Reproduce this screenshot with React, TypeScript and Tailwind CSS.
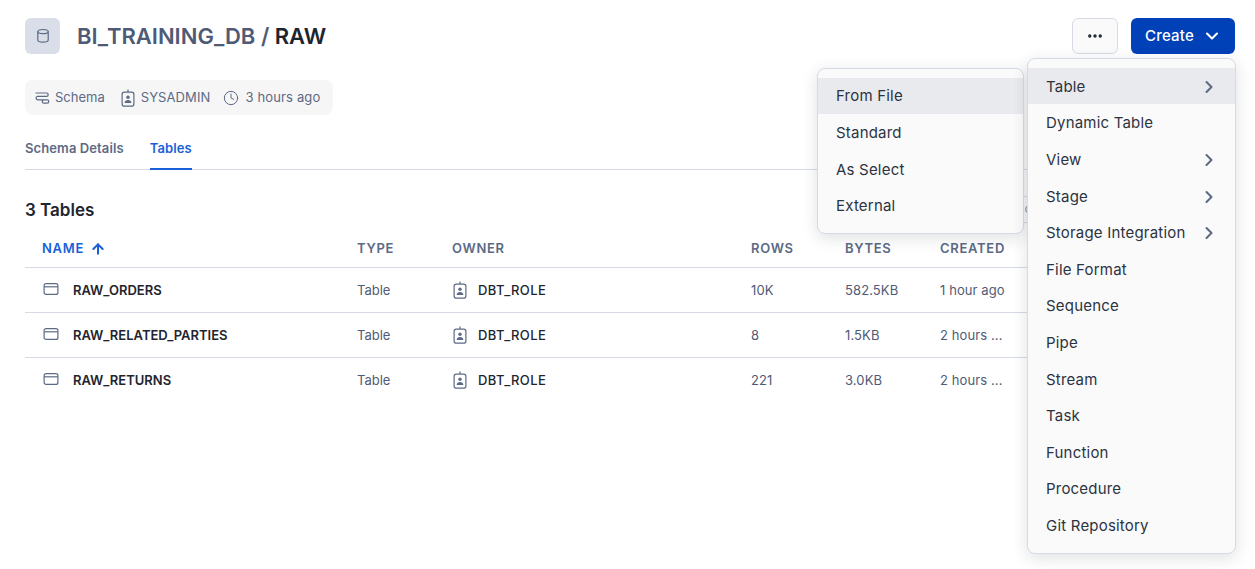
import { ArrowUp, ChevronDown, ChevronRight, Clock, Ellipsis, Search } from "lucide-react";

const font = { fontFamily: "Inter, sans-serif" };

function Database({ className = "" }: { className?: string }) {
  return (
    <svg viewBox="0 0 16 16" fill="none" stroke="currentColor" strokeWidth="1.2" className={className}>
      <ellipse cx="8" cy="3.6" rx="5.2" ry="2.1" />
      <path d="M2.8 3.6v8.4c0 1.2 2.3 2.2 5.2 2.2s5.2-1 5.2-2.2V3.6" />
    </svg>
  );
}

function Badge({ className = "" }: { className?: string }) {
  return (
    <svg viewBox="0 0 18 18" fill="none" stroke="currentColor" strokeWidth="1.2" className={className}>
      <rect x="3.1" y="3.1" width="11.8" height="14" rx="2.2" />
      <path d="M9 .5v2.6" />
      <circle cx="9" cy="8.2" r="1.7" fill="currentColor" stroke="none" />
      <path d="M5.6 14c0-2 1.5-3 3.4-3s3.4 1 3.4 3z" fill="currentColor" stroke="none" />
    </svg>
  );
}

function SchemaIcon({ className = "" }: { className?: string }) {
  return (
    <svg viewBox="0 0 16 16" fill="none" stroke="currentColor" strokeWidth="1.2" strokeLinecap="round" className={className}>
      <path d="M2 3h10.5a1.7 1.7 0 0 1 0 3.4H3.8" />
      <path d="M3.8 6.4a1.7 1.7 0 0 0 0 3.4h5" />
      <rect x="8.2" y="9.8" width="6.6" height="3.4" rx="1.7" />
    </svg>
  );
}

function TableIcon({ className = "" }: { className?: string }) {
  return (
    <svg viewBox="0 0 16 16" fill="none" stroke="currentColor" strokeWidth="1.2" className={className}>
      <rect x="1.1" y="2.6" width="13.8" height="10.8" rx="2" />
      <path d="M1.1 5.8h13.8" />
    </svg>
  );
}

const rows = [
  ["RAW_ORDERS", "10K", "582.5KB", "1 hour ago"],
  ["RAW_RELATED_PARTIES", "8", "1.5KB", "2 hours ..."],
  ["RAW_RETURNS", "221", "3.0KB", "2 hours ..."],
];

const grid = "grid grid-cols-[315px_95px_299px_94px_95px_1fr]";

const createItems: [string, boolean][] = [
  ["Table", true],
  ["Dynamic Table", false],
  ["View", true],
  ["Stage", true],
  ["Storage Integration", true],
  ["File Format", false],
  ["Sequence", false],
  ["Pipe", false],
  ["Stream", false],
  ["Task", false],
  ["Function", false],
  ["Procedure", false],
  ["Git Repository", false],
];

const subItems = ["From File", "Standard", "As Select", "External"];

export default function App() {
  return (
    <div style={font} className="relative h-[569px] w-[1255px] overflow-hidden bg-white pl-[25px] pr-[20px] pt-[18px] text-[#1e252f]">
      <header className="flex h-[36px] items-center justify-between">
        <div className="flex items-center gap-[17px]">
          <div className="flex h-[36px] w-[35px] items-center justify-center rounded-[6px] bg-[#d9dee8] text-[#5d6a85]">
            <Database className="h-[16px] w-[16px]" />
          </div>
          <h1 className="text-[22px] font-semibold leading-[36px] text-[#4f5b76]">
            BI_TRAINING_DB / <span className="text-[#1e252f]">RAW</span>
          </h1>
        </div>
        <div className="flex items-center gap-[13px]">
          <button className="flex h-[36px] w-[46px] items-center justify-center rounded-[6px] border border-[#d5dae6] bg-[#fafafb] text-[#1e252f]">
            <Ellipsis className="h-[18px] w-[18px]" strokeWidth={2.5} />
          </button>
          <button className="flex h-[36px] w-[104px] items-center gap-[8px] rounded-[6px] bg-[#0041b8] pl-[14px] text-[15px] font-medium tracking-[0.2px] text-white">
            Create
            <ChevronDown className="h-[20px] w-[20px]" strokeWidth={2.5} />
          </button>
        </div>
      </header>

      <div className="mt-[26px] flex h-[35px] w-[308px] items-center rounded-[8px] bg-[#f6f6f7] pl-[9px] text-[13px] text-[#5d6a85]">
        <span className="flex items-center gap-[5px]">
          <SchemaIcon className="h-[16px] w-[16px]" />
          Schema
        </span>
        <span className="ml-[14px] flex items-center gap-[4px] tracking-[0.1px]">
          <Badge className="h-[18px] w-[18px]" />
          SYSADMIN
        </span>
        <span className="ml-[13px] flex items-center gap-[6px]">
          <Clock className="h-[16px] w-[16px]" strokeWidth={1.5} />
          <span className="tracking-[0.15px]">3 hours ago</span>
        </span>
      </div>

      <nav className="mt-[16px] flex h-[39px] items-stretch gap-[26px] border-b border-[#d5dae6] text-[13px] font-semibold tracking-[0.1px]">
        <span className="pt-[8px] text-[#5d6a85]">Schema Details</span>
        <span className="-mb-px border-b-2 border-[#1a5fd8] pt-[8px] text-[#1a5fd8]">Tables</span>
      </nav>

      <div className="mt-[26px] flex h-[27px] items-center justify-between">
        <h2 className="text-[17px] font-semibold leading-[24px]">3 Tables</h2>
        <div className="flex h-[27px] w-[220px] items-center border-y border-[#d5dae6] pl-[9px] text-[#5d6a85]">
          <Search className="h-[14px] w-[14px]" strokeWidth={1.5} />
        </div>
      </div>

      <div className="mt-[7px]">
        <div className={`${grid} h-[38px] items-center border-b border-[#d5dae6] text-[13px] font-semibold tracking-[0.7px] text-[#5d6a85]`}>
          <span className="flex items-center gap-[6px] pl-[17px] text-[#1a5fd8]">
            NAME
            <ArrowUp className="h-[16px] w-[16px]" strokeWidth={3} />
          </span>
          <span className="pl-[17px]">TYPE</span>
          <span className="pl-[17px]">OWNER</span>
          <span className="pl-[17px]">ROWS</span>
          <span className="pl-[17px]">BYTES</span>
          <span className="pl-[17px]">CREATED</span>
        </div>
        {rows.map(([name, count, bytes, created], i) => (
          <div
            key={name}
            className={`${grid} h-[45px] items-center border-b text-[13px] leading-[20px] ${i < rows.length - 1 ? "border-[#d5dae6]" : "border-transparent"}`}
          >
            <span className="flex items-center gap-[14px] pl-[18px] font-semibold">
              <TableIcon className="h-[16px] w-[16px] -translate-y-[1px] text-[#5d6a85]" />
              {name}
            </span>
            <span className="pl-[17px] text-[#4f5b76]">Table</span>
            <span className="flex items-center gap-[9px] pl-[16px] font-medium tracking-[0.4px]">
              <Badge className="h-[18px] w-[18px] text-[#5d6a85]" />
              DBT_ROLE
            </span>
            <span className="pl-[17px] tracking-[0.1px] text-[#4f5b76]">{count}</span>
            <span className="pl-[17px] tracking-[0.1px] text-[#4f5b76]">{bytes}</span>
            <span className="pl-[17px] tracking-[0.1px] text-[#4f5b76]">{created}</span>
          </div>
        ))}
      </div>

      <div className="absolute left-[817px] top-[68px] w-[207px] rounded-[8px] border border-[#d5dae6] bg-[#fafafb] py-[9px] text-[15px] leading-[20px] tracking-[0.2px] text-[#2c3340] shadow-[0_4px_16px_rgba(30,37,47,0.14)]">
        {subItems.map((item, i) => (
          <div key={item} className={`flex items-center pl-[18px] pt-[0.8px] ${i === 0 ? "mb-[0.6px] h-[36px] bg-[#e9eaee]" : "h-[36.6px]"}`}>
            {item}
          </div>
        ))}
      </div>

      <div className="absolute left-[1027px] top-[58px] w-[209px] rounded-[8px] border border-[#d5dae6] bg-[#fafafb] py-[9px] text-[15px] leading-[20px] tracking-[0.2px] text-[#2c3340] shadow-[0_4px_16px_rgba(30,37,47,0.14)]">
        {createItems.map(([item, sub], i) => (
          <div key={item} className={`flex items-center justify-between pl-[18px] pr-[16px] pt-[1.2px] ${i === 0 ? "mb-[0.58px] h-[36px] bg-[#e9eaee]" : "h-[36.58px]"}`}>
            {item}
            {sub && <ChevronRight className="h-[20px] w-[20px] text-[#5d6a85]" strokeWidth={2.5} />}
          </div>
        ))}
      </div>
    </div>
  );
}
